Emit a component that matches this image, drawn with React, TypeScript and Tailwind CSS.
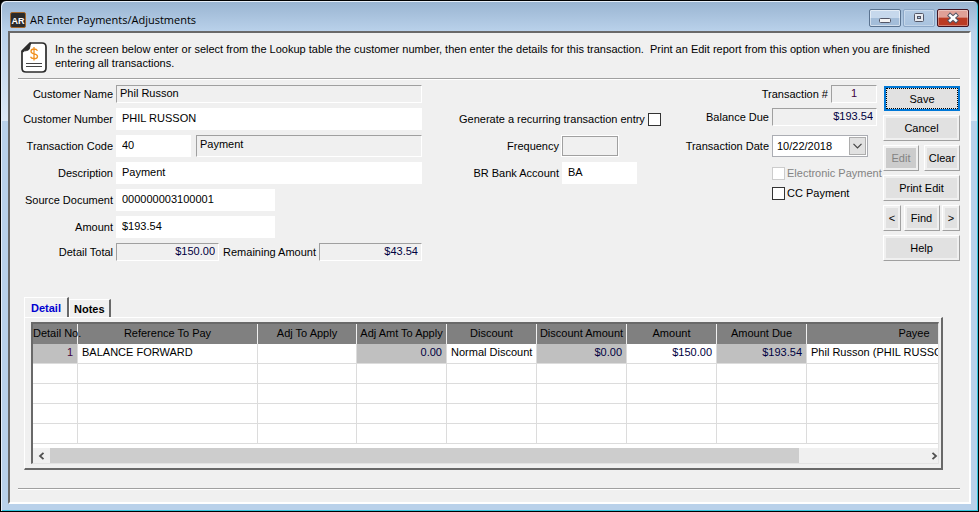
import { useState, type ReactNode } from "react";

const columns = [
  { name: "Detail No.", width: 45 },
  { name: "Reference To Pay", width: 180 },
  { name: "Adj To Apply", width: 99 },
  { name: "Adj Amt To Apply", width: 90 },
  { name: "Discount", width: 90 },
  { name: "Discount Amount", width: 90 },
  { name: "Amount", width: 90 },
  { name: "Amount Due", width: 90 },
  { name: "Payee", width: 215 },
];

const details = [
  [
    { text: "1", className: "bg-[#c0c0c0] text-right text-[#400040]" },
    { text: "BALANCE FORWARD", className: "" },
    { text: "", className: "" },
    { text: "0.00", className: "bg-[#c0c0c0] text-right text-[#000040]" },
    { text: "Normal Discount", className: "" },
    { text: "$0.00", className: "bg-[#c0c0c0] text-right text-[#000040]" },
    { text: "$150.00", className: "text-right text-[#000040]" },
    { text: "$193.54", className: "bg-[#c0c0c0] text-right text-[#000040]" },
    { text: "Phil Russon (PHIL RUSSON)", className: "" },
  ],
];

const sunken = "border border-t-[#a0a0a0] border-l-[#a0a0a0] border-r-white border-b-white bg-[#f0f0f0]";

function Label({ htmlFor, className = "", children }: { htmlFor: string; className?: string; children: ReactNode }) {
  return (
    <label htmlFor={htmlFor} className={`shrink-0 pr-[3px] text-right whitespace-nowrap ${className}`}>
      {children}
    </label>
  );
}

function TextBox({ id, value, className = "" }: { id: string; value: string; className?: string }) {
  return <input id={id} defaultValue={value} className={`h-[22px] min-w-0 bg-white px-1.5 pb-[2px] outline-none ${className}`} />;
}

function ReadOnlyBox({ id, value, className = "" }: { id: string; value: string; className?: string }) {
  return <input id={id} readOnly value={value} className={`h-[18px] min-w-0 px-[3px] pb-[2px] outline-none ${sunken} ${className}`} />;
}

function CheckBox({ id, disabled = false }: { id: string; disabled?: boolean }) {
  return (
    <input
      id={id}
      type="checkbox"
      disabled={disabled}
      className="size-[13px] shrink-0 appearance-none border border-[#333333] bg-white checked:bg-[#333333] disabled:border-[#cccccc]"
    />
  );
}

function PushButton({ className = "", disabled = false, label, children }: { className?: string; disabled?: boolean; label?: string; children: ReactNode }) {
  return (
    <button
      type="button"
      aria-label={label}
      disabled={disabled}
      className={`h-[26px] border border-t-white border-l-white border-r-[#a0a0a0] border-b-[#a0a0a0] bg-[#f0f0f0] p-[2px] disabled:text-[#838383] ${className}`}
    >
      <span className={`flex size-full items-center justify-center ${disabled ? "bg-[#cccccc]" : "bg-[#e1e1e1]"}`}>{children}</span>
    </button>
  );
}

function TitleBar() {
  return (
    <header className="flex h-[30px] items-center pt-2 pl-[2px]">
      <svg width="16" height="16" viewBox="0 0 16 16">
        <rect x="0.5" y="0.5" width="15" height="15" rx="1.5" fill="#2b2b2b" stroke="#a5682a" />
        <text x="8" y="11.5" textAnchor="middle" fontFamily="Liberation Sans, sans-serif" fontSize="9" fontWeight="700" fill="#fff">AR</text>
      </svg>
      <h1 className="ml-1 flex-1 font-['Open_Sans',sans-serif] text-[11px] leading-4">AR Enter Payments/Adjustments</h1>
      <div className="flex gap-[2px] pr-[2px] pb-1">
        <button type="button" aria-label="Minimize" className="flex h-[18px] w-8 items-center justify-center rounded-[2px] border border-[#5a7390] bg-linear-to-b from-[#c6d8ec] from-50% to-[#a3bdd9] to-50% shadow-[inset_0_0_0_1px_rgba(255,255,255,0.5)]">
          <svg width="12" height="12" viewBox="0 0 12 12"><rect x="0.5" y="6.5" width="11" height="4" rx="1" fill="#f4f4f4" stroke="#535666" /></svg>
        </button>
        <button type="button" aria-label="Maximize" className="flex h-[18px] w-8 items-center justify-center rounded-[2px] border border-[#8ba6c5] bg-linear-to-b from-[#b5cce5] to-[#a8c2de] shadow-[inset_0_0_0_1px_rgba(255,255,255,0.3)]">
          <svg width="12" height="12" viewBox="0 0 12 12"><rect x="1.5" y="1.5" width="9" height="8" rx="1" fill="#e8ebf0" stroke="#535666" /><rect x="4.5" y="4.5" width="3" height="2" fill="#a8c2de" stroke="#535666" /></svg>
        </button>
        <button type="button" aria-label="Close" className="flex h-[18px] w-8 items-center justify-center rounded-[2px] border border-[#431422] bg-linear-to-b from-[#e0a097] from-45% to-[#bb3b24] to-50% shadow-[inset_0_0_0_1px_rgba(255,255,255,0.35)]">
          <svg width="12" height="12" viewBox="0 0 12 12"><path d="M1.5 2L10.5 10M10.5 2L1.5 10" stroke="#535666" strokeWidth="4.4" /><path d="M2.2 2.6L9.8 9.4M9.8 2.6L2.2 9.4" stroke="#fff" strokeWidth="2.6" /></svg>
        </button>
      </div>
    </header>
  );
}

function Intro() {
  return (
    <div className="flex h-[46px] gap-2 border-b border-[#a0a0a0] pt-[9px] pl-[3px] shadow-[0_1px_0_#fff]">
      <svg width="26" height="31" viewBox="0 0 26 31" className="shrink-0">
        <path d="M9 1H21Q25 1 25 5V26Q25 30 21 30H5Q1 30 1 26V9Z" fill="#fff" stroke="#2b2b2b" strokeWidth="1.7" />
        <path d="M9 1L1 9.5L2 10Q3 8.6 5.5 8.6Q8.6 8.4 8.8 5Q8.8 2.5 10 1.5Z" fill="#2b2b2b" stroke="#2b2b2b" />
        <path d="M5 21.5H21M5 24.5H21" stroke="#444" strokeWidth="1.2" />
        <path d="M16.5 8.8Q15.5 7 13 7Q10 7 10 9.3Q10 11.3 13 11.8Q16.5 12.4 16.5 14.4Q16.5 16.7 13 16.7Q10.2 16.7 9.5 14.8M13 5V18.5" fill="none" stroke="#f09020" strokeWidth="1.3" />
      </svg>
      <p className="whitespace-pre-wrap leading-[14px]">
        {"In the screen below enter or select from the Lookup table the customer number, then enter the details for this transaction.  Print an Edit report from this option when you are finished entering all transactions."}
      </p>
    </div>
  );
}

function CustomerFields() {
  return (
    <div className="flex w-[404px] shrink-0 flex-col gap-[5px]">
      <div className="flex items-center">
        <Label htmlFor="name" className="w-[98px]">Customer Name</Label>
        <ReadOnlyBox id="name" value="Phil Russon" className="flex-1" />
      </div>
      <div className="flex items-center">
        <Label htmlFor="number" className="w-[98px]">Customer Number</Label>
        <TextBox id="number" value="PHIL RUSSON" className="flex-1" />
      </div>
      <div className="flex items-center">
        <Label htmlFor="code" className="w-[98px]">Transaction Code</Label>
        <TextBox id="code" value="40" className="w-[75px]" />
        <input aria-label="Transaction code name" readOnly value="Payment" className={`ml-[5px] h-[22px] min-w-0 flex-1 px-[3px] pb-1 outline-none ${sunken}`} />
      </div>
      <div className="flex items-center">
        <Label htmlFor="description" className="w-[98px]">Description</Label>
        <TextBox id="description" value="Payment" className="flex-1" />
      </div>
      <div className="flex items-center">
        <Label htmlFor="source" className="w-[98px]">Source Document</Label>
        <TextBox id="source" value="000000003100001" className="w-[159px]" />
      </div>
      <div className="flex items-center">
        <Label htmlFor="amount" className="w-[98px]">Amount</Label>
        <TextBox id="amount" value="$193.54" className="w-[159px]" />
      </div>
      <div className="flex items-center">
        <Label htmlFor="total" className="w-[98px]">Detail Total</Label>
        <ReadOnlyBox id="total" value="$150.00" className="w-[103px] text-right text-[#000040]" />
        <Label htmlFor="remaining" className="flex-1">Remaining Amount</Label>
        <ReadOnlyBox id="remaining" value="$43.54" className="w-[103px] text-right text-[#000040]" />
      </div>
    </div>
  );
}

function RecurringFields() {
  return (
    <div className="flex w-[202px] flex-col gap-[5px] pt-[23px]">
      <div className="flex h-[22px] items-center justify-between">
        <label htmlFor="recurring" className="whitespace-nowrap">Generate a recurring transaction entry</label>
        <CheckBox id="recurring" />
      </div>
      <div className="flex h-[22px] items-center">
        <Label htmlFor="frequency" className="w-[103px] pr-1">Frequency</Label>
        <input id="frequency" disabled className="h-5 w-14 border border-[#a0a0a0] bg-[#f0f0f0] shadow-[0_0_0_1px_#fff]" />
      </div>
      <div className="flex items-center">
        <Label htmlFor="bank" className="w-[103px] pr-1">BR Bank Account</Label>
        <TextBox id="bank" value="BA" className="w-[75px]" />
      </div>
    </div>
  );
}

function TransactionFields() {
  return (
    <div className="flex w-[192px] flex-col gap-[5px]">
      <div className="flex items-center justify-end">
        <Label htmlFor="transaction">Transaction #</Label>
        <ReadOnlyBox id="transaction" value="1" className="w-[46px] text-center text-[#400040]" />
      </div>
      <div className="flex h-[22px] items-start justify-end">
        <Label htmlFor="balance" className="leading-[18px]">Balance Due</Label>
        <ReadOnlyBox id="balance" value="$193.54" className="w-[105px] text-right text-[#000040]" />
      </div>
      <div className="flex items-center">
        <Label htmlFor="date" className="w-[87px]">Transaction Date</Label>
        <div className="flex h-[22px] w-24 border border-[#abadb3] bg-white p-[1px]">
          <input id="date" defaultValue="10/22/2018" className="min-w-0 flex-1 pl-[3px] outline-none" />
          <button type="button" aria-label="Open calendar" className="flex w-[17px] items-center justify-center border border-[#adadad] bg-[#e1e1e1]">
            <svg width="9" height="6" viewBox="0 0 9 6"><path d="M0.5 0.8L4.5 4.8L8.5 0.8" fill="none" stroke="#444" strokeWidth="1.2" /></svg>
          </button>
        </div>
      </div>
      <div className="flex flex-col gap-[6px] pt-1 pl-[87px]">
        <div className="flex items-center">
          <CheckBox id="electronic" disabled />
          <label htmlFor="electronic" className="pl-[2px] whitespace-nowrap text-[#838383]">Electronic Payment</label>
        </div>
        <div className="flex items-center">
          <CheckBox id="cc" />
          <label htmlFor="cc" className="pl-[2px]">CC Payment</label>
        </div>
      </div>
    </div>
  );
}

function Actions() {
  return (
    <div className="flex w-[77px] shrink-0 flex-col gap-1 pt-px">
      <button type="button" className="ml-px h-[25px] border-2 border-[#0078d7] bg-[#e1e1e1]">
        <span className="flex size-full items-center justify-center border border-dotted border-black">Save</span>
      </button>
      <PushButton>Cancel</PushButton>
      <div className="flex justify-between">
        <PushButton disabled className="w-9">Edit</PushButton>
        <PushButton className="w-9">Clear</PushButton>
      </div>
      <PushButton>Print Edit</PushButton>
      <div className="flex justify-between">
        <PushButton label="Previous" className="w-[18px]">&lt;</PushButton>
        <PushButton className="w-9">Find</PushButton>
        <PushButton label="Next" className="w-[18px]">&gt;</PushButton>
      </div>
      <PushButton>Help</PushButton>
    </div>
  );
}

function DetailGrid() {
  return (
    <div className="border border-t-2 border-l-2 border-t-[#696969] border-l-[#696969] border-r-[#e3e3e3] border-b-[#e3e3e3] bg-white">
      <div className="overflow-hidden">
        <table className="w-[989px] table-fixed border-separate border-spacing-0">
          <colgroup>
            {columns.map((c) => (
              <col key={c.name} style={{ width: c.width }} />
            ))}
          </colgroup>
          <thead>
            <tr className="h-5 bg-[#808080]">
              {columns.map((c) => (
                <th key={c.name} className="border-r border-[#f0f0f0] p-0 pb-[2px] font-normal whitespace-nowrap">{c.name}</th>
              ))}
            </tr>
          </thead>
          <tbody>
            {details.map((row) => (
              <tr key={row[0].text} className="h-5">
                {row.map((cell, i) => (
                  <td key={i} className={`border-r border-b border-[#dcdcdc] px-1 py-0 pb-1 whitespace-nowrap ${cell.className}`}>{cell.text}</td>
                ))}
              </tr>
            ))}
            {[2, 3, 4, 5].map((n) => (
              <tr key={n} className="h-5">
                {columns.map((c) => (
                  <td key={c.name} className="border-r border-b border-[#dcdcdc] p-0" />
                ))}
              </tr>
            ))}
          </tbody>
        </table>
      </div>
      <div className="mt-1 flex h-[15px] bg-[#f0f0f0]">
        <button type="button" aria-label="Scroll left" className="flex w-[17px] items-center justify-center">
          <svg width="7" height="8" viewBox="0 0 7 8"><path d="M5.5 0.8L2 4L5.5 7.2" fill="none" stroke="#505050" strokeWidth="1.8" /></svg>
        </button>
        <div className="flex-1">
          <div className="h-full w-[86%] bg-[#cdcdcd]" />
        </div>
        <button type="button" aria-label="Scroll right" className="flex w-[17px] items-center justify-end">
          <svg width="7" height="8" viewBox="0 0 7 8"><path d="M1.5 0.8L5 4L1.5 7.2" fill="none" stroke="#505050" strokeWidth="1.8" /></svg>
        </button>
      </div>
    </div>
  );
}

export default function App() {
  const [tab, setTab] = useState("Detail");

  return (
    <div className="min-h-screen bg-black font-['Liberation_Sans',Arial,sans-serif] text-[11px] leading-[14px] text-black">
      <div className="flex min-h-screen flex-col rounded-t-[6px] border border-black bg-[linear-gradient(#99b4d1,#b9d1ea_30px,#dce8f5_120px,#b9d1ea_120px)] px-[7px] pb-[7px] shadow-[inset_1px_1px_0_#e6eef8,inset_-1px_-1px_0_#33c5dd]">
        <TitleBar />
        <main className="flex flex-1 flex-col border-2 border-t-[#696969] border-l-[#696969] border-r-white border-b-white bg-[#f0f0f0] pr-[9px] pb-[13px] pl-2">
          <Intro />
          <form className="flex pt-1.5" onSubmit={(e) => e.preventDefault()}>
            <CustomerFields />
            <div className="flex flex-1 justify-between pr-1.5 pl-[37px]">
              <RecurringFields />
              <TransactionFields />
            </div>
            <Actions />
          </form>
          <div className="mt-9 mr-[17px] ml-1.5">
            <div role="tablist" className="flex items-end">
              {["Detail", "Notes"].map((name) => (
                <button
                  key={name}
                  type="button"
                  role="tab"
                  aria-selected={tab === name}
                  onClick={() => setTab(name)}
                  className={`border-t border-r-2 border-l border-t-white border-r-[#696969] border-l-white font-bold ${tab === name ? "h-5 px-1.5 text-[#0000d0]" : "h-[18px] px-1"}`}
                >
                  {name}
                </button>
              ))}
            </div>
            <div className="border border-r-2 border-b-2 border-t-white border-l-white border-r-[#696969] border-b-[#696969] py-1 pr-[2px] pl-1.5">
              <DetailGrid />
            </div>
          </div>
          <hr className="mt-auto border-[#a0a0a0] shadow-[0_1px_0_#fff]" />
        </main>
      </div>
    </div>
  );
}
